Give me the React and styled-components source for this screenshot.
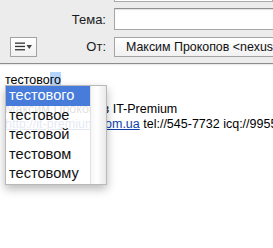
import React from 'react';
import styled, { createGlobalStyle } from 'styled-components';

const GlobalStyle = createGlobalStyle`
  html, body {
    margin: 0;
    padding: 0;
    background: #ffffff;
    overflow: hidden;
  }
  body {
    font-family: "Liberation Sans", Arial, sans-serif;
  }
`;

const Window = styled.div`
  position: relative;
  width: 273px;
  height: 248px;
  overflow: hidden;
  background: #ffffff;
`;

const Header = styled.div`
  height: 63px;
  background: #ececec;
  border-bottom: 1px solid #8d8d8d;
  box-shadow: 0 1px 1px rgba(0, 0, 0, 0.08);
  overflow: hidden;
`;

const PrevField = styled.div`
  margin-left: 114px;
  height: 1px;
  border: 1px solid #a9a9a9;
  border-top: none;
  background: #ffffff;
`;

const Row = styled.div`
  display: flex;
  align-items: center;
  margin-top: ${(p) => p.$gap}px;
  height: ${(p) => p.$h}px;
`;

const LabelCell = styled.div`
  width: 106px;
  display: flex;
  align-items: center;
  justify-content: space-between;
  flex: none;
`;

const Label = styled.span`
  margin-left: auto;
  font-size: 13px;
  color: #1a1a1a;
`;

const TextField = styled.div`
  flex: none;
  margin-left: 8px;
  width: 200px;
  height: 20px;
  background: #ffffff;
  border: 1px solid #a7a7a7;
  border-top-color: #8f8f8f;
  box-shadow: inset 0 1px 1px rgba(0, 0, 0, 0.12);
`;

const PopupField = styled.div`
  flex: none;
  margin-left: 8px;
  width: 220px;
  height: 20px;
  box-sizing: border-box;
  padding-left: 11px;
  display: flex;
  align-items: center;
  background: linear-gradient(#ffffff, #f1f1f1);
  border: 1px solid #a4a4a4;
  font-size: 12.4px;
  color: #111;
  white-space: nowrap;
  overflow: hidden;
`;

const MenuButton = styled.div`
  margin-left: 10px;
  width: 25px;
  height: 18px;
  border: 1px solid #a2a2a2;
  background: linear-gradient(#ffffff, #f0f0f0);
  display: flex;
  align-items: center;
  justify-content: center;
`;

const Body = styled.div`
  padding: 9px 0 0 5px;
  font-size: 12.5px;
  line-height: 14.5px;
  color: #000;
  white-space: nowrap;
`;

const Line = styled.div``;

const Selected = styled.span`
  background: #b5d5ff;
  padding: 1px 0;
`;

const Link = styled.span`
  color: #0e3fa8;
  text-decoration: underline;
`;

const Menu = styled.div`
  position: absolute;
  left: 5px;
  top: 85px;
  width: 100px;
  display: flex;
  background: rgba(255, 255, 255, 0.88);
  border: 1px solid #b9b9b9;
  box-shadow: 0 4px 9px rgba(0, 0, 0, 0.28);
`;

const List = styled.div`
  flex: 1;
`;

const Item = styled.div`
  height: 19.6px;
  line-height: 19.6px;
  padding-left: 3px;
  font-size: 14.6px;
  color: ${(p) => (p.$active ? '#ffffff' : '#111111')};
  background: ${(p) => (p.$active ? 'rgba(56, 113, 216, 0.92)' : 'transparent')};
`;

const Scroller = styled.div`
  width: 15px;
  background: linear-gradient(90deg, #f6f6f6, #ffffff 40%, #e9e9e9);
  border-left: 1px solid #e2e2e2;
`;

const MenuIcon = () => (
  <svg width="19" height="9" viewBox="0 0 19 9">
    <rect x="1" y="0.5" width="10" height="1.3" fill="#333" />
    <rect x="1" y="3.8" width="10" height="1.3" fill="#333" />
    <rect x="1" y="7.1" width="10" height="1.3" fill="#333" />
    <path d="M12.5 3 L18 3 L15.25 7 Z" fill="#444" />
  </svg>
);

const words = ['тестового', 'тестовое', 'тестовой', 'тестовом', 'тестовому'];

const App = () => (
  <Window>
    <GlobalStyle />
    <Header>
      <PrevField />
      <Row $gap={6} $h={22}>
        <LabelCell>
          <Label>Тема:</Label>
        </LabelCell>
        <TextField />
      </Row>
      <Row $gap={6} $h={21}>
        <LabelCell>
          <MenuButton>
            <MenuIcon />
          </MenuButton>
          <Label>От:</Label>
        </LabelCell>
        <PopupField>Максим Прокопов &lt;nexus@it-premium.com.ua&gt;</PopupField>
      </Row>
    </Header>
    <Body>
      <Line>
        тестово<Selected>го</Selected>
      </Line>
      <Line>С уважением,</Line>
      <Line>Максим Прокопов IT-Premium</Line>
      <Line>
        <Link>http://it-premium.com.ua</Link> tel://545-7732 icq://995525
      </Line>
    </Body>
    <Menu>
      <List>
        {words.map((w, i) => (
          <Item key={w} $active={i === 0}>
            {w}
          </Item>
        ))}
      </List>
      <Scroller />
    </Menu>
  </Window>
);

export default App;
